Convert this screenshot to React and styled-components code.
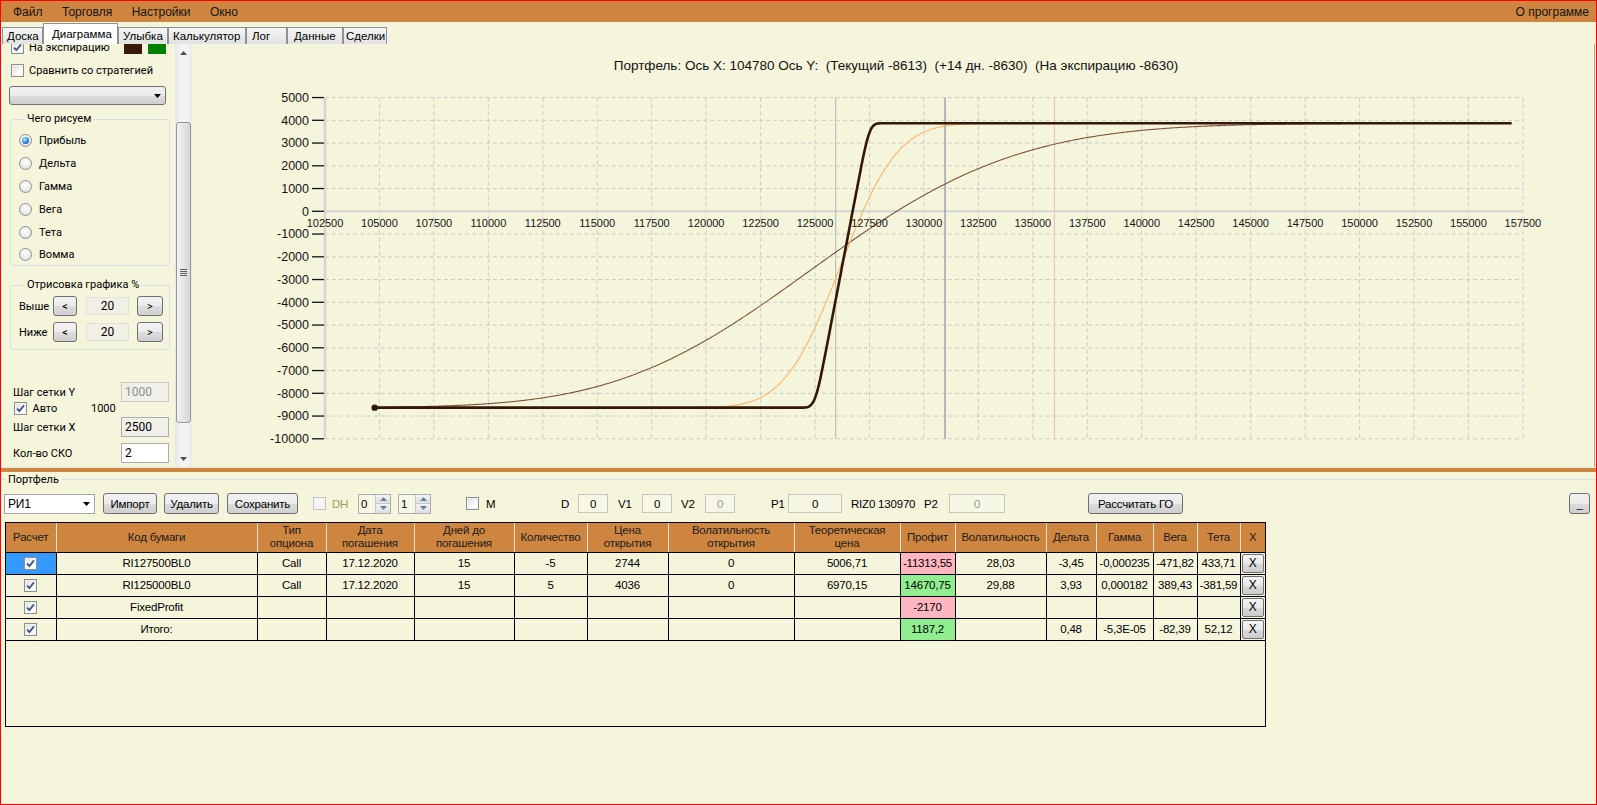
import React from 'react';
import styled, { createGlobalStyle } from 'styled-components';

const UI = `"Liberation Sans", Arial, sans-serif`;
const SEGOE = `Roboto, "Liberation Sans", Arial, sans-serif`;
const NARROW = `"Liberation Sans", Arial, sans-serif`;
const BEIGE = '#f5f5dc';
const ORANGE = '#cd853f';

const GlobalStyle = createGlobalStyle`
  html, body { margin: 0; padding: 0; background: ${BEIGE}; }
  body { font-family: ${UI}; font-size: 12px; color: #000; }
  *, *::before, *::after { box-sizing: border-box; }
`;

/* ---------- chart maths ---------- */
const XMIN = 102500;
const sx = (v) => 133 + ((v - XMIN) / 2500) * 54.45;
const sy = (v) => 137.3 - v * 0.02275;

function ncdf(x) {
  const t = 1 / (1 + 0.2316419 * Math.abs(x));
  const d = 0.3989423 * Math.exp((-x * x) / 2);
  const p = d * t * (0.3193815 + t * (-0.3565638 + t * (1.781478 + t * (-1.821256 + t * 1.330274))));
  return x > 0 ? 1 - p : p;
}
function call(S, K, vol, T) {
  const s = vol * Math.sqrt(T);
  const d1 = Math.log(S / K) / s + s / 2;
  return S * ncdf(d1) - K * ncdf(d1 - s);
}
function profit(S, T) {
  return 5 * (call(S, 125000, 0.2988, T) - 4036) - 5 * (call(S, 127500, 0.2803, T) - 2744) - 2170;
}
function curve(T) {
  const pts = [];
  for (let s = 104780; s <= 157000; s += 50) {
    pts.push(`${sx(s).toFixed(1)},${sy(profit(s, T)).toFixed(1)}`);
  }
  return 'M' + pts.join('L');
}

/* ---------- frame ---------- */
const Window = styled.div`
  width: 1597px;
  height: 805px;
  border: 1px solid #ff0000;
  background: ${BEIGE};
  display: flex;
  flex-direction: column;
  overflow: hidden;
`;

const MenuBar = styled.div`
  height: 21px;
  flex: none;
  background: ${ORANGE};
  display: flex;
  align-items: center;
  gap: 19.5px;
  padding: 0 7px 0 12px;
  font-family: ${UI};
  font-size: 12px;
`;

const MenuItem = styled.span`
  color: #141414;
  margin-left: ${(p) => (p.$right ? 'auto' : '0')};
`;

const TabStrip = styled.div`
  height: 22px;
  flex: none;
  display: flex;
  align-items: flex-end;
  padding-left: 1px;
`;

const Tab = styled.div`
  width: ${(p) => p.$w}px;
  height: ${(p) => (p.$active ? 21 : 17)}px;
  border: 1px solid #8d9096;
  border-bottom: none;
  background: ${(p) => (p.$active ? '#ffffff' : 'linear-gradient(#f7f7f7, #e1e1e1)')};
  display: flex;
  align-items: center;
  padding-left: ${(p) => p.$pl}px;
  font-family: ${UI};
  font-size: 11.5px;
  white-space: nowrap;
  overflow: hidden;
  flex: none;
`;

const TopPane = styled.div`
  height: 423px;
  flex: none;
  display: flex;
`;

/* ---------- left panel ---------- */
const LeftPanel = styled.div`
  width: 191px;
  flex: none;
  display: flex;
  overflow: hidden;
  font-family: ${SEGOE};
  font-size: 11px;
`;

const LeftScroll = styled.div`
  flex: 1;
  overflow: hidden;
`;

const LeftInner = styled.div`
  margin-top: -7px;
  display: flex;
  flex-direction: column;
`;

const CheckRow = styled.div`
  height: 20px;
  margin-top: ${(p) => p.$mt || 0}px;
  padding-left: 10px;
  display: flex;
  align-items: center;
  gap: 5px;
  white-space: nowrap;
`;

const BoxCheck = styled.span`
  width: 13px;
  height: 13px;
  flex: none;
  border: 1px solid ${(p) => (p.$disabled ? '#c2c2c2' : '#8e8f8f')};
  background: ${(p) => (p.$disabled ? '#f4f4f4' : 'linear-gradient(135deg, #dcdcdc, #ffffff 70%)')};
  box-shadow: inset 0 0 0 1px #f4f4f4;
  display: inline-flex;
  align-items: center;
  justify-content: center;
`;

function Check({ on, disabled }) {
  return (
    <BoxCheck $disabled={disabled}>
      {on && (
        <svg width="9" height="9" viewBox="0 0 9 9">
          <path d="M1 4.6 L3.4 7 L8 1.4" fill="none" stroke="#44598a" strokeWidth="1.9" />
        </svg>
      )}
    </BoxCheck>
  );
}

const Swatches = styled.span`
  margin-left: auto;
  margin-right: 9px;
  display: flex;
  gap: 6px;
  align-self: flex-end;
  padding-bottom: 3px;
`;

const Swatch = styled.span`
  width: 18px;
  height: 10px;
  background: ${(p) => p.$c};
`;

const DropButton = styled.div`
  margin: 6px 0 0 8px;
  width: 157px;
  height: 19px;
  border: 1px solid #707070;
  border-radius: 3px;
  background: linear-gradient(#f2f2f2, #ebebeb 50%, #dddddd 51%, #cfcfcf);
  display: flex;
  align-items: center;
  justify-content: flex-end;
  padding-right: 4px;
`;

const GroupBox = styled.fieldset`
  margin: ${(p) => p.$mt}px 0 0 9px;
  width: 160px;
  height: ${(p) => p.$h}px;
  border: 1px solid #d5dfe5;
  border-radius: 3px;
  padding: ${(p) => p.$pt}px 0 0 8px;
  display: flex;
  flex-direction: column;
`;

const Legend = styled.legend`
  padding: 0 2px;
  margin-left: 6px;
  line-height: 14px;
  font-size: 11px;
`;

const RadioRow = styled.div`
  height: 22.8px;
  display: flex;
  align-items: center;
  gap: 7px;
`;

const Radio = styled.span`
  width: 13px;
  height: 13px;
  flex: none;
  border-radius: 50%;
  border: 1px solid #8f8f8f;
  background: radial-gradient(circle at 50% 35%, #ffffff 0%, #ebebeb 60%, #cfcfcf 100%);
  display: inline-flex;
  align-items: center;
  justify-content: center;
  &::after {
    content: '';
    width: 7px;
    height: 7px;
    border-radius: 50%;
    background: radial-gradient(circle at 40% 35%, #b4ecff, #2a86d6 55%, #0d3f80);
    display: ${(p) => (p.$on ? 'block' : 'none')};
  }
`;

const StepRow = styled.div`
  height: 20px;
  margin-top: ${(p) => p.$mt || 0}px;
  display: flex;
  align-items: center;
`;

const StepLabel = styled.span`
  width: 34px;
`;

const SmallBtn = styled.button`
  width: ${(p) => p.$w}px;
  height: 20px;
  margin-left: ${(p) => p.$ml || 0}px;
  padding: 0;
  border: 1px solid #707070;
  border-radius: 3px;
  background: linear-gradient(#f2f2f2, #ebebeb 50%, #dddddd 51%, #cfcfcf);
  font-family: ${SEGOE};
  font-size: 11px;
  color: #000;
  flex: none;
`;

const ValueBox = styled.div`
  width: 43px;
  height: 18px;
  margin-left: 9px;
  background: #f0f0e6;
  border: 1px solid #e2e2d6;
  display: flex;
  align-items: center;
  justify-content: center;
  font-size: 12px;
`;

const FieldRow = styled.div`
  height: ${(p) => p.$h || 20}px;
  margin-top: ${(p) => p.$mt || 0}px;
  padding-left: ${(p) => p.$pl || 12}px;
  display: flex;
  align-items: center;
`;

const FieldLabel = styled.span`
  width: ${(p) => p.$w}px;
  flex: none;
`;

const TextBox = styled.div`
  width: 48px;
  height: 20px;
  border: 1px solid ${(p) => (p.$kind === 'disabled' ? '#c9c9c0' : '#abadb3')};
  background: ${(p) => (p.$kind === 'edit' ? '#ffffff' : '#f0f0e9')};
  color: ${(p) => (p.$kind === 'disabled' ? '#8d8d8d' : '#000')};
  display: flex;
  align-items: center;
  padding-left: 3px;
  font-size: 12px;
`;

const ScrollBar = styled.div`
  width: 17px;
  flex: none;
  display: flex;
  flex-direction: column;
  background: linear-gradient(to right, #e6e6e6, #f3f3f3 30%, #f3f3f3 70%, #e9e9e9);
`;

const ScrollBtn = styled.div`
  height: 17px;
  flex: none;
  display: flex;
  align-items: center;
  justify-content: center;
`;

const ScrollTrack = styled.div`
  flex: 1;
`;

const ScrollThumb = styled.div`
  margin: 61px 1px 0 1px;
  height: 301px;
  border: 1px solid #979797;
  border-radius: 3px;
  background: linear-gradient(to right, #f2f2f2, #e6e6e6 45%, #d7d7d7);
  display: flex;
  align-items: center;
  justify-content: center;
`;

/* ---------- chart ---------- */
const ChartPane = styled.div`
  flex: 1;
  display: flex;
  flex-direction: column;
  border-right: 1px solid #a9a9a9;
  margin-right: 1px;
`;

const ChartTitle = styled.div`
  height: 30px;
  flex: none;
  padding-top: 14px;
  padding-left: 6px;
  line-height: 16px;
  text-align: center;
  white-space: pre;
  font-family: ${UI};
  font-size: 13.5px;
  color: #111;
`;

const ChartSvg = styled.svg`
  display: block;
  font-family: ${UI};
  fill: #161616;
`;

function Chart() {
  const yVals = [];
  for (let v = 5000; v >= -10000; v -= 1000) yVals.push(v);
  const xVals = [];
  for (let v = 102500; v <= 157500; v += 2500) xVals.push(v);
  const xL = sx(102500);
  const xR = sx(157500);
  const yT = sy(5000);
  const yB = sy(-10000);
  const markers = [
    { v: 125950, c: '#b2b2b2' },
    { v: 130970, c: '#6c7c8c' },
    { v: 135990, c: '#ffb8c4' },
  ];
  return (
    <ChartSvg width="1402" height="393" viewBox="0 0 1402 393">
      {yVals
        .filter((v) => v !== 0)
        .map((v) => (
          <line key={'h' + v} x1={xL} x2={xR} y1={sy(v)} y2={sy(v)} stroke="#cacaca" strokeDasharray="4 3" />
        ))}
      {xVals.slice(1).map((v) => (
        <line key={'v' + v} x1={sx(v)} x2={sx(v)} y1={yT} y2={yB} stroke="#cacaca" strokeDasharray="4 3" />
      ))}
      <line x1={xL} x2={xR} y1={sy(0)} y2={sy(0)} stroke="#d4d4d4" strokeWidth="2" />
      <line x1={xL} x2={xL} y1={yT} y2={yB} stroke="#d4d4d4" strokeWidth="2.5" />
      {markers.map((m) => (
        <line key={m.v} x1={sx(m.v)} x2={sx(m.v)} y1={yT} y2={yB} stroke={m.c} strokeWidth="1" />
      ))}
      <path d={curve(15 / 365)} fill="none" stroke="#7b5238" strokeWidth="1.1" />
      <path d={curve(1 / 365)} fill="none" stroke="#ffb46a" strokeWidth="1.1" />
      <path d={curve(0.012 / 365)} fill="none" stroke="#331707" strokeWidth="2.6" strokeLinejoin="round" />
      <circle cx={sx(104780)} cy={sy(-8630)} r="3.2" fill="#331707" />
      {yVals.map((v) => (
        <g key={'t' + v}>
          <line x1={xL - 13} x2={xL - 1} y1={sy(v)} y2={sy(v)} stroke="#111" strokeWidth="1.3" />
          <text x={xL - 16} y={sy(v)} dy="0.35em" textAnchor="end" fontSize="12.5">
            {v}
          </text>
        </g>
      ))}
      {xVals.map((v) => (
        <text key={'x' + v} x={sx(v)} y={sy(0) + 12} dy="0.35em" textAnchor="middle" fontSize="11">
          {v}
        </text>
      ))}
    </ChartSvg>
  );
}

/* ---------- bottom pane ---------- */
const Splitter = styled.div`
  height: 5px;
  flex: none;
  border-top: 1px solid #e9e9d8;
  background: ${ORANGE};
`;

const PortfolioHead = styled.div`
  height: 14px;
  flex: none;
  display: flex;
  align-items: center;
  font-family: ${SEGOE};
  font-size: 11px;
  &::before {
    content: '';
    width: 4px;
    margin: 0 2px 0 1px;
    border-top: 1px solid #d5dfe5;
  }
  &::after {
    content: '';
    flex: 1;
    margin-left: 3px;
    border-top: 1px solid #d5dfe5;
  }
`;

const Toolbar = styled.div`
  height: 21px;
  flex: none;
  margin-top: 7px;
  padding-left: 3px;
  display: flex;
  align-items: center;
  font-family: ${NARROW};
  font-size: 11.5px;
  letter-spacing: -0.2px;
`;

const Combo = styled.div`
  width: 91px;
  height: 20px;
  flex: none;
  border: 1px solid #a5a5a5;
  background: #ffffff;
  display: flex;
  align-items: center;
  justify-content: space-between;
  padding: 0 4px 0 3px;
  font-size: 12px;
`;

const ToolButton = styled.button`
  width: ${(p) => p.$w}px;
  height: 21px;
  margin-left: ${(p) => p.$ml || 0}px;
  flex: none;
  padding: 0;
  border: 1px solid #707070;
  border-radius: 3px;
  background: linear-gradient(#f2f2f2, #ebebeb 50%, #dddddd 51%, #cfcfcf);
  font-family: ${NARROW};
  font-size: 11.5px;
  letter-spacing: -0.2px;
  color: #000;
`;

const ToolLabel = styled.span`
  width: ${(p) => p.$w}px;
  margin-left: ${(p) => p.$ml || 0}px;
  flex: none;
  white-space: nowrap;
  color: ${(p) => (p.$muted ? '#a39a5c' : '#000')};
`;

const ToolCheck = styled.span`
  margin-left: ${(p) => p.$ml || 0}px;
  display: inline-flex;
  flex: none;
`;

const ToolBox = styled.div`
  width: ${(p) => p.$w}px;
  height: 19px;
  margin-left: ${(p) => p.$ml || 0}px;
  flex: none;
  border: 1px solid #c6c6bd;
  background: #f7f7e6;
  color: ${(p) => (p.$muted ? '#9a9a9a' : '#000')};
  display: flex;
  align-items: center;
  justify-content: center;
`;

const Spin = styled.div`
  width: 33px;
  height: 20px;
  margin-left: ${(p) => p.$ml || 0}px;
  flex: none;
  border: 1px solid #abadb3;
  background: #f7f7e6;
  display: flex;
  align-items: stretch;
`;

const SpinValue = styled.span`
  flex: 1;
  display: flex;
  align-items: center;
  padding-left: 2px;
`;

const SpinButtons = styled.span`
  width: 15px;
  display: flex;
  flex-direction: column;
  border-left: 1px solid #c9c9c9;
`;

const SpinHalf = styled.span`
  flex: 1;
  display: flex;
  align-items: center;
  justify-content: center;
  background: linear-gradient(#f4f4f4, #dedede);
  border-bottom: ${(p) => (p.$top ? '1px solid #c9c9c9' : 'none')};
`;

function Spinner({ value, ml }) {
  return (
    <Spin $ml={ml}>
      <SpinValue>{value}</SpinValue>
      <SpinButtons>
        <SpinHalf $top>
          <svg width="7" height="4" viewBox="0 0 7 4">
            <path d="M0 4 L3.5 0 L7 4 Z" fill="#6b7fa0" />
          </svg>
        </SpinHalf>
        <SpinHalf>
          <svg width="7" height="4" viewBox="0 0 7 4">
            <path d="M0 0 L3.5 4 L7 0 Z" fill="#6b7fa0" />
          </svg>
        </SpinHalf>
      </SpinButtons>
    </Spin>
  );
}

const DownArrow = () => (
  <svg width="7" height="4" viewBox="0 0 7 4">
    <path d="M0 0 L7 0 L3.5 4 Z" fill="#000" />
  </svg>
);

/* ---------- grid ---------- */
const GridBox = styled.div`
  margin: 8px 0 0 4px;
  width: 1261px;
  height: 205px;
  flex: none;
  border: 1px solid #000;
  background: ${BEIGE};
  overflow: hidden;
`;

const Table = styled.table`
  border-collapse: collapse;
  table-layout: fixed;
  width: 1259px;
  font-family: ${NARROW};
  font-size: 11.5px;
  letter-spacing: -0.2px;
`;

const Col = styled.col`
  width: ${(p) => p.$w}px;
`;

const Th = styled.th`
  height: 29px;
  padding: 0 1px;
  background: ${ORANGE};
  border-right: 1px solid #efe2cf;
  border-bottom: 1px solid #000;
  font-weight: normal;
  line-height: 13px;
  color: #1c1c1c;
  white-space: nowrap;
  overflow: hidden;
  &:last-child {
    border-right: none;
  }
`;

const Td = styled.td`
  height: 22px;
  padding: 0 ${(p) => (p.$tight ? 0 : 1)}px;
  border: 1px solid #000;
  background: ${(p) => p.$bg || 'transparent'};
  text-align: center;
  white-space: nowrap;
  overflow: hidden;
  &:first-child {
    border-left: none;
  }
  &:last-child {
    border-right: none;
  }
`;

const CellCheck = styled.span`
  display: inline-flex;
  vertical-align: middle;
`;

const XButton = styled.button`
  width: 22px;
  height: 19px;
  padding: 0;
  vertical-align: middle;
  border: 1px solid #707070;
  border-radius: 2px;
  background: linear-gradient(#f4f4f4, #e8e8e8 50%, #dadada 51%, #cdcdcd);
  font-family: ${NARROW};
  font-size: 12px;
  color: #000;
`;

const COLS = [50, 201, 69, 88, 100, 73, 81, 126, 106, 55, 91, 50, 57, 44, 43, 25];
const HEAD = [
  ['Расчет'],
  ['Код бумаги'],
  ['Тип', 'опциона'],
  ['Дата', 'погашения'],
  ['Дней до', 'погашения'],
  ['Количество'],
  ['Цена', 'открытия'],
  ['Волатильность', 'открытия'],
  ['Теоретическая', 'цена'],
  ['Профит'],
  ['Волатильность'],
  ['Дельта'],
  ['Гамма'],
  ['Вега'],
  ['Тета'],
  ['X'],
];
const PINK = '#ffb6c1';
const GREEN = '#90ee90';
const ROWS = [
  { sel: true, cells: ['RI127500BL0', 'Call', '17.12.2020', '15', '-5', '2744', '0', '5006,71', '-11313,55', '28,03', '-3,45', '-0,000235', '-471,82', '433,71'], pbg: PINK },
  { cells: ['RI125000BL0', 'Call', '17.12.2020', '15', '5', '4036', '0', '6970,15', '14670,75', '29,88', '3,93', '0,000182', '389,43', '-381,59'], pbg: GREEN },
  { cells: ['FixedProfit', '', '', '', '', '', '', '', '-2170', '', '', '', '', ''], pbg: PINK },
  { cells: ['Итого:', '', '', '', '', '', '', '', '1187,2', '', '0,48', '-5,3E-05', '-82,39', '52,12'], pbg: GREEN },
];

function Grid() {
  return (
    <GridBox>
      <Table>
        <colgroup>
          {COLS.map((w, i) => (
            <Col key={i} $w={w} />
          ))}
        </colgroup>
        <thead>
          <tr>
            {HEAD.map((h, i) => (
              <Th key={i}>
                {h[0]}
                {h[1] && <br />}
                {h[1]}
              </Th>
            ))}
          </tr>
        </thead>
        <tbody>
          {ROWS.map((r, ri) => (
            <tr key={ri}>
              <Td $bg={r.sel ? '#3399ff' : undefined}>
                <CellCheck>
                  <Check on />
                </CellCheck>
              </Td>
              {r.cells.map((c, ci) => (
                <Td key={ci} $bg={ci === 8 ? r.pbg : undefined}>
                  {c}
                </Td>
              ))}
              <Td $tight>
                <XButton>X</XButton>
              </Td>
            </tr>
          ))}
        </tbody>
      </Table>
    </GridBox>
  );
}

const TABS = [
  ['Доска', 41, 4],
  ['Диаграмма', 75, 8, true],
  ['Улыбка', 50, 4],
  ['Калькулятор', 78, 4],
  ['Лог', 41, 5],
  ['Данные', 56, 6],
  ['Сделки', 44, 2],
];

const RADIOS = ['Прибыль', 'Дельта', 'Гамма', 'Вега', 'Тета', 'Вомма'];

export default function App() {
  return (
    <>
      <GlobalStyle />
      <Window>
        <MenuBar>
          <MenuItem>Файл</MenuItem>
          <MenuItem>Торговля</MenuItem>
          <MenuItem>Настройки</MenuItem>
          <MenuItem>Окно</MenuItem>
          <MenuItem $right>О программе</MenuItem>
        </MenuBar>

        <TabStrip>
          {TABS.map(([t, w, pl, a]) => (
            <Tab key={t} $w={w} $pl={pl} $active={a}>
              {t}
            </Tab>
          ))}
        </TabStrip>

        <TopPane>
          <LeftPanel>
            <LeftScroll>
              <LeftInner>
                <CheckRow>
                  <Check on />
                  <span>На экспирацию</span>
                  <Swatches>
                    <Swatch $c="#3a1a08" />
                    <Swatch $c="#008000" />
                  </Swatches>
                </CheckRow>
                <CheckRow $mt={3}>
                  <Check />
                  <span>Сравнить со стратегией</span>
                </CheckRow>
                <DropButton>
                  <DownArrow />
                </DropButton>

                <GroupBox $mt={7} $h={154} $pt={3.6}>
                  <Legend>Чего рисуем</Legend>
                  {RADIOS.map((r, i) => (
                    <RadioRow key={r}>
                      <Radio $on={i === 0} />
                      <span>{r}</span>
                    </RadioRow>
                  ))}
                </GroupBox>

                <GroupBox $mt={12} $h={72} $pt={4}>
                  <Legend>Отрисовка графика %</Legend>
                  <StepRow>
                    <StepLabel>Выше</StepLabel>
                    <SmallBtn $w={24}>&lt;</SmallBtn>
                    <ValueBox>20</ValueBox>
                    <SmallBtn $w={26} $ml={8}>&gt;</SmallBtn>
                  </StepRow>
                  <StepRow $mt={6}>
                    <StepLabel>Ниже</StepLabel>
                    <SmallBtn $w={24}>&lt;</SmallBtn>
                    <ValueBox>20</ValueBox>
                    <SmallBtn $w={26} $ml={8}>&gt;</SmallBtn>
                  </StepRow>
                </GroupBox>

                <FieldRow $mt={32}>
                  <FieldLabel $w={108}>Шаг сетки Y</FieldLabel>
                  <TextBox $kind="disabled">1000</TextBox>
                </FieldRow>
                <FieldRow $h={13} $pl={13}>
                  <Check on />
                  <FieldLabel $w={64}>&nbsp;&nbsp;Авто</FieldLabel>
                  <span>1000</span>
                </FieldRow>
                <FieldRow $mt={2}>
                  <FieldLabel $w={108}>Шаг сетки X</FieldLabel>
                  <TextBox $kind="readonly">2500</TextBox>
                </FieldRow>
                <FieldRow $mt={6}>
                  <FieldLabel $w={108}>Кол-во СКО</FieldLabel>
                  <TextBox $kind="edit">2</TextBox>
                </FieldRow>
              </LeftInner>
            </LeftScroll>

            <ScrollBar>
              <ScrollBtn>
                <svg width="7" height="4" viewBox="0 0 7 4">
                  <path d="M0 4 L3.5 0 L7 4 Z" fill="#4d4d4d" />
                </svg>
              </ScrollBtn>
              <ScrollTrack>
                <ScrollThumb>
                  <svg width="7" height="7" viewBox="0 0 7 7">
                    <path d="M0 0.5 H7 M0 2.5 H7 M0 4.5 H7 M0 6.5 H7" stroke="#606060" strokeWidth="1" />
                  </svg>
                </ScrollThumb>
              </ScrollTrack>
              <ScrollBtn>
                <svg width="7" height="4" viewBox="0 0 7 4">
                  <path d="M0 0 L7 0 L3.5 4 Z" fill="#4d4d4d" />
                </svg>
              </ScrollBtn>
            </ScrollBar>
          </LeftPanel>

          <ChartPane>
            <ChartTitle>
              {'Портфель: Ось X: 104780 Ось Y:  (Текущий -8613)  (+14 дн. -8630)  (На экспирацию -8630)'}
            </ChartTitle>
            <Chart />
          </ChartPane>
        </TopPane>

        <Splitter />
        <PortfolioHead>Портфель</PortfolioHead>

        <Toolbar>
          <Combo>
            <span>РИ1</span>
            <DownArrow />
          </Combo>
          <ToolButton $w={54} $ml={8}>Импорт</ToolButton>
          <ToolButton $w={55} $ml={7}>Удалить</ToolButton>
          <ToolButton $w={71} $ml={8}>Сохранить</ToolButton>
          <ToolCheck $ml={15}>
            <Check disabled />
          </ToolCheck>
          <ToolLabel $w={20} $ml={6} $muted>DH</ToolLabel>
          <Spinner value="0" ml={6} />
          <Spinner value="1" ml={7} />
          <ToolCheck $ml={35}>
            <Check />
          </ToolCheck>
          <ToolLabel $w={20} $ml={7}>M</ToolLabel>
          <ToolLabel $w={12} $ml={55}>D</ToolLabel>
          <ToolBox $w={30} $ml={5}>0</ToolBox>
          <ToolLabel $w={18} $ml={10}>V1</ToolLabel>
          <ToolBox $w={30} $ml={6}>0</ToolBox>
          <ToolLabel $w={18} $ml={9}>V2</ToolLabel>
          <ToolBox $w={30} $ml={6} $muted>0</ToolBox>
          <ToolLabel $w={14} $ml={36}>P1</ToolLabel>
          <ToolBox $w={54} $ml={3}>0</ToolBox>
          <ToolLabel $w={67} $ml={9}>RIZ0 130970</ToolLabel>
          <ToolLabel $w={18} $ml={6}>P2</ToolLabel>
          <ToolBox $w={56} $ml={7} $muted>0</ToolBox>
          <ToolButton $w={95} $ml={83}>Рассчитать ГО</ToolButton>
          <ToolButton $w={21} $ml={386}>_</ToolButton>
        </Toolbar>

        <Grid />
      </Window>
    </>
  );
}
